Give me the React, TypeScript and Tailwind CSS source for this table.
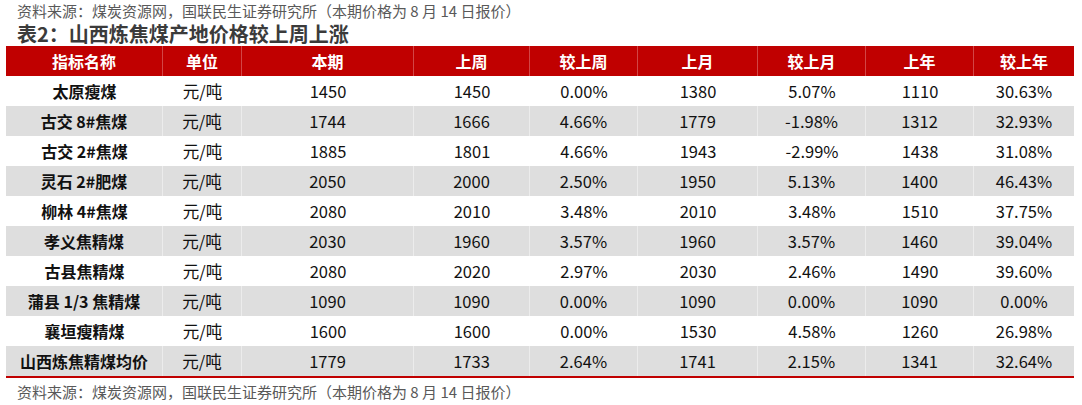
const rows = [
  ["太原瘦煤", "元/吨", "1450", "1450", "0.00%", "1380", "5.07%", "1110", "30.63%"],
  ["古交 8#焦煤", "元/吨", "1744", "1666", "4.66%", "1779", "-1.98%", "1312", "32.93%"],
  ["古交 2#焦煤", "元/吨", "1885", "1801", "4.66%", "1943", "-2.99%", "1438", "31.08%"],
  ["灵石 2#肥煤", "元/吨", "2050", "2000", "2.50%", "1950", "5.13%", "1400", "46.43%"],
  ["柳林 4#焦煤", "元/吨", "2080", "2010", "3.48%", "2010", "3.48%", "1510", "37.75%"],
  ["孝义焦精煤", "元/吨", "2030", "1960", "3.57%", "1960", "3.57%", "1460", "39.04%"],
  ["古县焦精煤", "元/吨", "2080", "2020", "2.97%", "2030", "2.46%", "1490", "39.60%"],
  ["蒲县 1/3 焦精煤", "元/吨", "1090", "1090", "0.00%", "1090", "0.00%", "1090", "0.00%"],
  ["襄垣瘦精煤", "元/吨", "1600", "1600", "0.00%", "1530", "4.58%", "1260", "26.98%"],
  ["山西炼焦精煤均价", "元/吨", "1779", "1733", "2.64%", "1741", "2.15%", "1341", "32.64%"],
];

const headers = ["指标名称", "单位", "本期", "上周", "较上周", "上月", "较上月", "上年", "较上年"];

const cols = "grid grid-cols-[157px_79px_172px_116px_108px_120px_108px_108px_100px]";

const source = "资料来源：煤炭资源网，国联民生证券研究所（本期价格为 8 月 14 日报价）";

export default function App() {
  return (
    <div
      className="w-[1082px] h-[405px] bg-white overflow-hidden"
      style={{ fontFamily: '"Noto Sans CJK SC", "Noto Sans", sans-serif' }}
    >
      <div className="pl-[17px] h-[22px] text-[15px] leading-[22px] text-[#595959]">{source}</div>
      <div className="pl-[17px] h-[24px] text-[20px] leading-[24px] font-bold text-[#3b3b3b]">
        表2：山西炼焦煤产地价格较上周上涨
      </div>
      <div className="ml-[6px] w-[1068px] border-b-2 border-[#c00000]">
        <div className={`${cols} h-[30px] bg-[#c00000]`}>
          {headers.map((h, i) => (
            <div
              key={h}
              className={`flex items-center justify-center text-white font-bold text-[16px] ${
                i < headers.length - 1 ? "border-r border-[#d24545]" : ""
              }`}
            >
              {h}
            </div>
          ))}
        </div>
        {rows.map((r, ri) => (
          <div key={r[0]} className={`${cols} h-[30px] ${ri % 2 === 1 ? "bg-[#dedede]" : "bg-white"}`}>
            {r.map((c, ci) => (
              <div
                key={ci}
                className={`flex items-center justify-center text-[#111] ${
                  ci === 0 ? "font-bold text-[16px]" : "text-[16.5px]"
                } ${ci < r.length - 1 && ri % 2 === 1 ? "border-r border-[#ececec]" : ""}`}
              >
                {c}
              </div>
            ))}
          </div>
        ))}
      </div>
      <div className="pl-[17px] pt-[3px] text-[15px] leading-[22px] text-[#595959]">{source}</div>
    </div>
  );
}
